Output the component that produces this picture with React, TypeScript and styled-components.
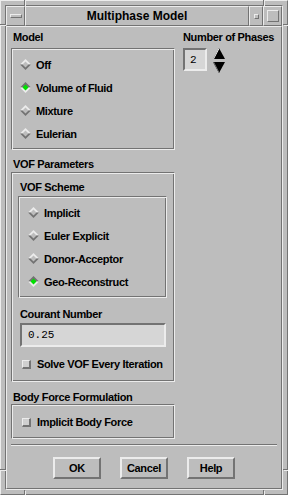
import styled, { createGlobalStyle } from "styled-components"

const BG = "#bdbdbd"
const LIGHT = "#ececec"
const DARK = "#737373"
const FIELD = "#d6d6d6"

const Global = createGlobalStyle`
    html, body {
        margin:0;
        padding:0;
        background:${BG};
    }
    body {
        font-family:"Liberation Sans", Arial, sans-serif;
        font-weight:700;
        font-size:11px;
        letter-spacing:-0.35px;
        color:#000;
    }
`

const Window = styled.div`
    position:relative;
    width:288px;
    height:495px;
    box-sizing:border-box;
    background:${BG};
    border-top:1px solid ${LIGHT};
    border-left:1px solid ${LIGHT};
    border-bottom:1px solid ${DARK};
    border-right:1px solid ${DARK};
    padding:4px;
    display:flex;
`

const Mark = styled.div<{ $side: "top" | "bottom" | "left" | "right"; $at: number }>`
    position:absolute;
    background:${DARK};
    box-shadow:1px 1px 0 ${LIGHT};
    ${p => p.$side === "top" && `top:-1px; left:${p.$at}px; width:1px; height:5px;`}
    ${p => p.$side === "bottom" && `bottom:-1px; left:${p.$at}px; width:1px; height:5px;`}
    ${p => p.$side === "left" && `left:-1px; top:${p.$at}px; height:1px; width:5px;`}
    ${p => p.$side === "right" && `right:-1px; top:${p.$at}px; height:1px; width:5px;`}
`

const Inner = styled.div`
    flex:1;
    display:flex;
    flex-direction:column;
    border-top:1px solid ${DARK};
    border-left:1px solid ${DARK};
    border-bottom:1px solid ${LIGHT};
    border-right:1px solid ${LIGHT};
`

const TitleBar = styled.div`
    height:20px;
    display:flex;
`

const Raised = styled.div<{ $w?: number }>`
    box-sizing:border-box;
    ${p => (p.$w ? `width:${p.$w}px;` : "flex:1;")}
    height:100%;
    border-top:1px solid ${LIGHT};
    border-left:1px solid ${LIGHT};
    border-bottom:1px solid ${DARK};
    border-right:1px solid ${DARK};
    display:flex;
    align-items:center;
    justify-content:center;
`

const Title = styled(Raised)`
    font-size:12px;
    letter-spacing:0;
`

const MenuGlyph = styled.div`
    width:10px;
    height:2px;
    border-top:1px solid ${LIGHT};
    border-left:1px solid ${LIGHT};
    border-bottom:1px solid ${DARK};
    border-right:1px solid ${DARK};
    margin-top:-1px;
`

const BoxGlyph = styled.div<{ $size: number }>`
    box-sizing:border-box;
    width:${p => p.$size}px;
    height:${p => p.$size}px;
    border-top:1px solid ${LIGHT};
    border-left:1px solid ${LIGHT};
    border-bottom:1px solid ${DARK};
    border-right:1px solid ${DARK};
`

const Content = styled.div`
    flex:1;
    display:flex;
    flex-direction:column;
    border-top:1px solid ${LIGHT};
    border-left:1px solid ${LIGHT};
    border-bottom:1px solid ${DARK};
    border-right:1px solid ${DARK};
`

const TopRow = styled.div`
    display:flex;
    gap:8px;
    padding:3px 0 0 4px;
`

const Column = styled.div<{ $w?: number }>`
    display:flex;
    flex-direction:column;
    ${p => p.$w && `width:${p.$w}px;`}
`

const Label = styled.div<{ $top?: number; $bottom?: number; $left?: number }>`
    height:14px;
    line-height:14px;
    white-space:nowrap;
    margin-top:${p => p.$top ?? 0}px;
    margin-bottom:${p => p.$bottom ?? 0}px;
    margin-left:${p => p.$left ?? 2}px;
`

const Group = styled.div<{ $pad?: string }>`
    display:flex;
    flex-direction:column;
    border-top:1px solid ${DARK};
    border-left:1px solid ${DARK};
    border-bottom:1px solid ${LIGHT};
    border-right:1px solid ${LIGHT};
    box-shadow:inset 1px 1px 0 ${LIGHT}, inset -1px -1px 0 ${DARK};
    padding:${p => p.$pad ?? "4px 0 4px 0"};
`

const Option = styled.div<{ $indent: number }>`
    height:23px;
    display:flex;
    align-items:center;
    gap:5px;
    padding-left:${p => p.$indent}px;
    white-space:nowrap;
`

const Check = styled.div<{ $indent: number; $top?: number }>`
    height:20px;
    display:flex;
    align-items:center;
    gap:5px;
    padding-left:${p => p.$indent}px;
    margin-top:${p => p.$top ?? 0}px;
    white-space:nowrap;
`

const CheckBox = styled.span`
    box-sizing:border-box;
    width:9px;
    height:9px;
    background:#cfcfcf;
    border-top:1px solid ${LIGHT};
    border-left:1px solid ${LIGHT};
    border-bottom:2px solid ${DARK};
    border-right:2px solid ${DARK};
    margin-right:1px;
`

const TextField = styled.div<{ $w: number; $h: number; $pad: number; $ml?: number }>`
    box-sizing:border-box;
    width:${p => p.$w}px;
    height:${p => p.$h}px;
    margin-left:${p => p.$ml ?? 0}px;
    background:${FIELD};
    border-top:2px solid ${DARK};
    border-left:2px solid ${DARK};
    border-bottom:2px solid ${LIGHT};
    border-right:2px solid ${LIGHT};
    padding-left:${p => p.$pad}px;
    display:flex;
    align-items:center;
    font-family:"Liberation Mono", "Courier New", monospace;
    font-weight:400;
    font-size:11px;
    letter-spacing:0;
`

const Spinner = styled.div`
    display:flex;
    align-items:flex-start;
    gap:6px;
    margin-top:4px;
`

const Separator = styled.div`
    margin:5px 4px 0 4px;
    height:0;
    border-top:1px solid ${DARK};
    border-bottom:1px solid ${LIGHT};
`

const ButtonRow = styled.div`
    display:flex;
    justify-content:center;
    gap:19px;
    margin-top:11px;
`

const Button = styled.div`
    box-sizing:border-box;
    width:48px;
    height:22px;
    display:flex;
    align-items:center;
    justify-content:center;
    border-top:2px solid ${LIGHT};
    border-left:2px solid ${LIGHT};
    border-bottom:2px solid ${DARK};
    border-right:2px solid ${DARK};
`

const Diamond = ({ on }: { on?: boolean }) => (
  <svg width="11" height="11" viewBox="0 0 11 11">
    <polygon points="0,5.5 5.5,0 11,5.5" fill={on ? DARK : LIGHT} />
    <polygon points="0,5.5 5.5,11 11,5.5" fill={on ? LIGHT : DARK} />
    <polygon points="2.5,5.5 5.5,2.5 8.5,5.5 5.5,8.5" fill={on ? "#00e000" : BG} />
  </svg>
)

const Arrows = () => (
  <svg width="12" height="26" viewBox="0 0 12 26">
    <polygon points="6,0 12,11 0,11" fill="#000" />
    <line x1="0.5" y1="11" x2="6" y2="0.5" stroke={LIGHT} strokeWidth="1" />
    <polygon points="0,14 12,14 6,25" fill="#000" />
    <line x1="0.5" y1="14" x2="6" y2="24.5" stroke={DARK} strokeWidth="1" />
  </svg>
)

const RadioList = ({ items, selected, indent }: { items: string[]; selected: string; indent: number }) => (
  <>
    {items.map(it => (
      <Option key={it} $indent={indent}>
        <Diamond on={it === selected} />
        {it}
      </Option>
    ))}
  </>
)

export default function App() {
  return (
    <>
      <Global />
      <Window>
        <Mark $side="top" $at={23} />
        <Mark $side="top" $at={262} />
        <Mark $side="bottom" $at={23} />
        <Mark $side="bottom" $at={262} />
        <Mark $side="left" $at={23} />
        <Mark $side="left" $at={468} />
        <Mark $side="right" $at={23} />
        <Mark $side="right" $at={468} />
        <Inner>
          <TitleBar>
            <Raised $w={19}><MenuGlyph /></Raised>
            <Title>Multiphase Model</Title>
            <Raised $w={14}><BoxGlyph $size={5} /></Raised>
            <Raised $w={19}><BoxGlyph $size={12} /></Raised>
          </TitleBar>
          <Content>
            <TopRow>
              <Column $w={164}>
                <Label $bottom={4}>Model</Label>
                <Group $pad="4px 0 4px 0">
                  <RadioList
                    items={["Off", "Volume of Fluid", "Mixture", "Eulerian"]}
                    selected="Volume of Fluid"
                    indent={8}
                  />
                </Group>

                <Label $top={7} $bottom={1}>VOF Parameters</Label>
                <Group $pad="7px 7px 7px 6px">
                  <Label $bottom={2}>VOF Scheme</Label>
                  <Group $pad="4px 0 4px 0">
                    <RadioList
                      items={["Implicit", "Euler Explicit", "Donor-Acceptor", "Geo-Reconstruct"]}
                      selected="Geo-Reconstruct"
                      indent={9}
                    />
                  </Group>
                  <Label $top={9} $bottom={2}>Courant Number</Label>
                  <TextField $w={146} $h={24} $pad={6} $ml={2}>0.25</TextField>
                  <Check $indent={4} $top={7}>
                    <CheckBox />
                    Solve VOF Every Iteration
                  </Check>
                </Group>

                <Label $top={8}>Body Force Formulation</Label>
                <Group $pad="7px 0 6px 0">
                  <Check $indent={10}>
                    <CheckBox />
                    Implicit Body Force
                  </Check>
                </Group>
              </Column>

              <Column>
                <Label $left={0}>Number of Phases</Label>
                <Spinner>
                  <TextField $w={24} $h={23} $pad={5}>2</TextField>
                  <Arrows />
                </Spinner>
              </Column>
            </TopRow>

            <Separator />
            <ButtonRow>
              <Button>OK</Button>
              <Button>Cancel</Button>
              <Button>Help</Button>
            </ButtonRow>
          </Content>
        </Inner>
      </Window>
    </>
  )
}
